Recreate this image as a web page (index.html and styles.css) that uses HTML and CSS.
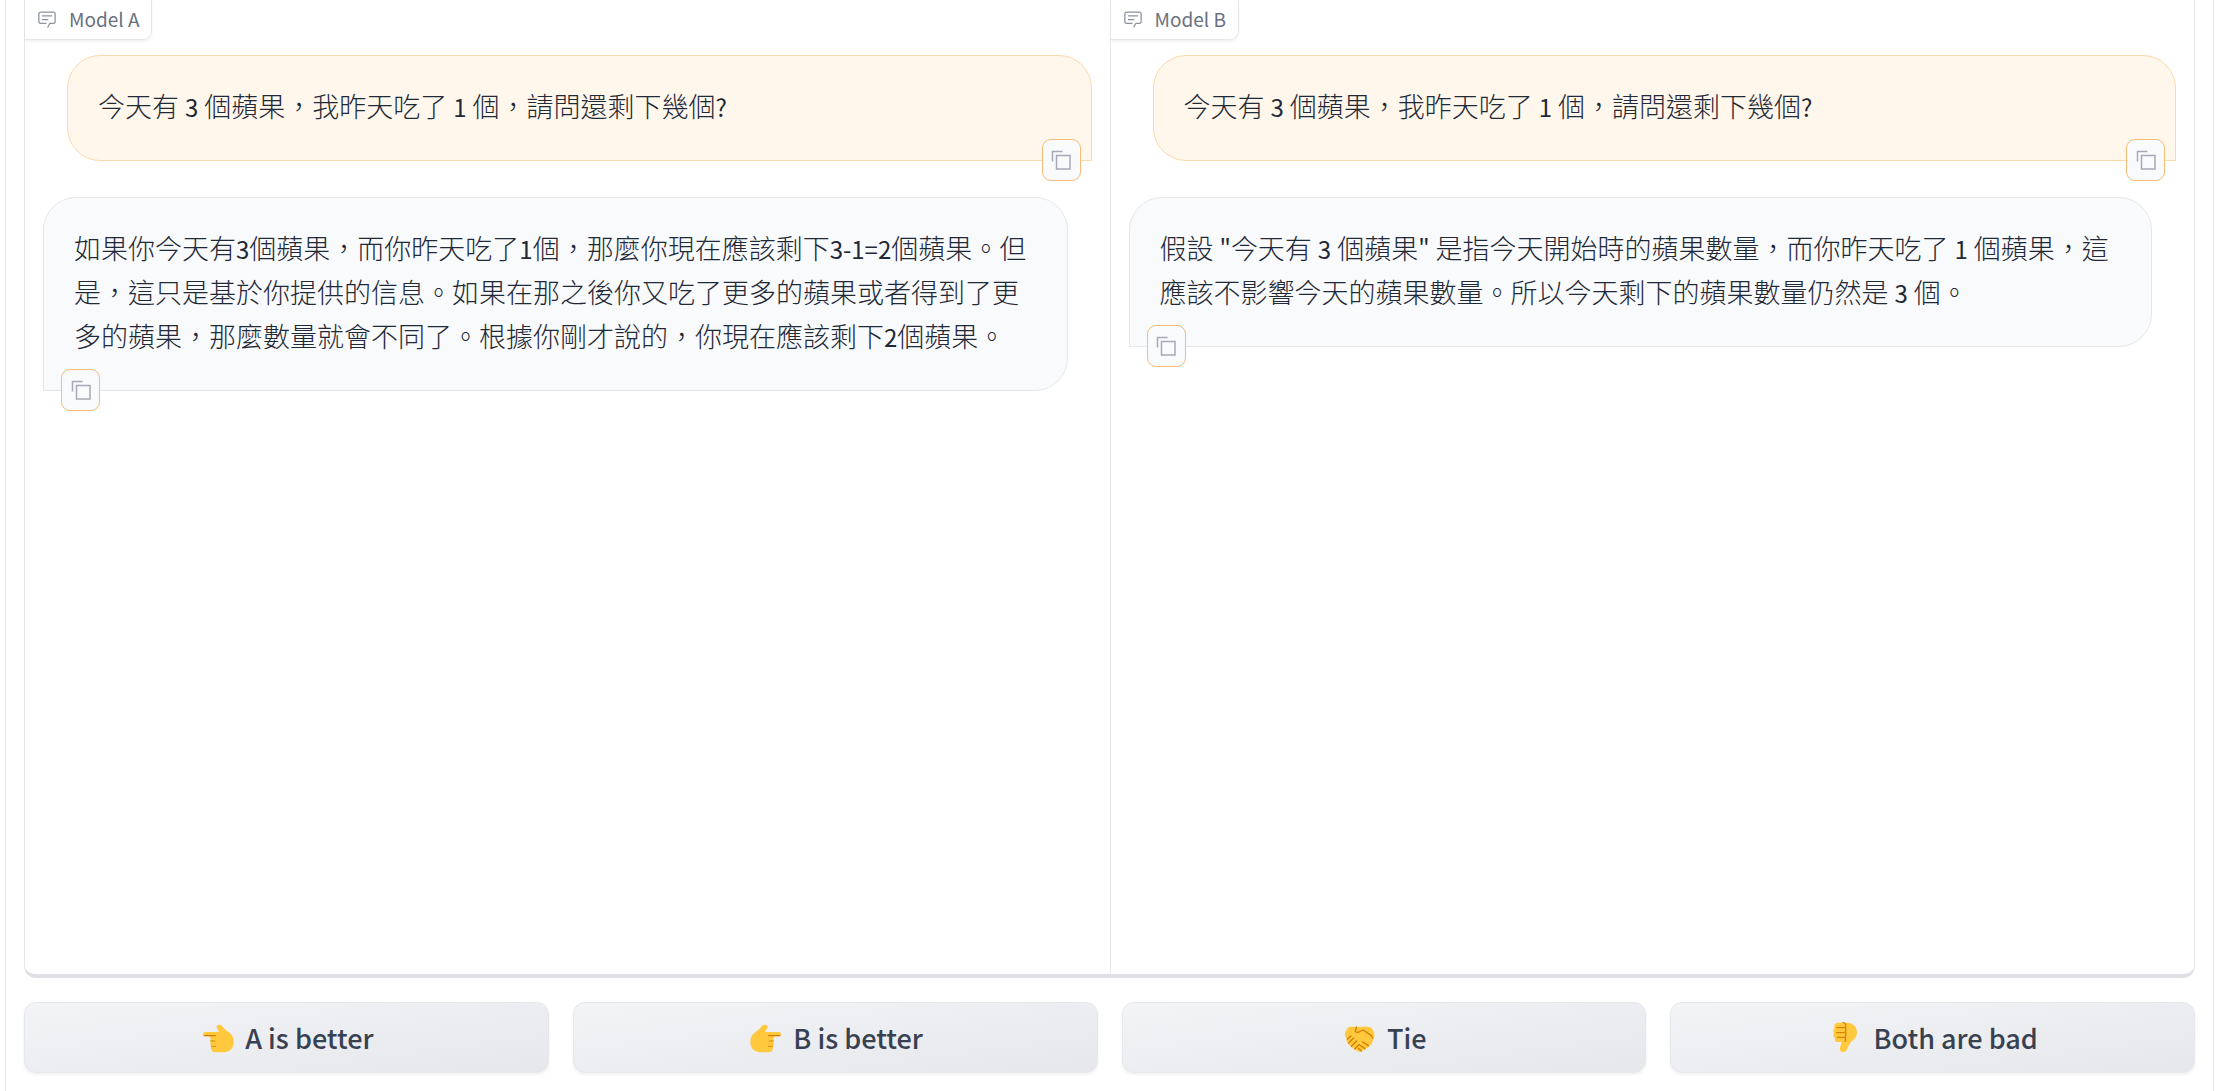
FILE: index.html
```html
<!DOCTYPE html>
<html lang="zh-Hant">
<head>
<meta charset="utf-8">
<meta name="viewport" content="width=device-width, initial-scale=1">
<title>Model A / Model B</title>
<link rel="stylesheet" href="styles.css">
</head>
<body>
<svg class="sprite" aria-hidden="true">
  <symbol id="chat" viewBox="0 0 32 32">
    <path fill="currentColor" d="M17.74 30L16 29l4-7h6a2 2 0 0 0 2-2V8a2 2 0 0 0-2-2H6a2 2 0 0 0-2 2v12a2 2 0 0 0 2 2h9v2H6a4 4 0 0 1-4-4V8a4 4 0 0 1 4-4h20a4 4 0 0 1 4 4v12a4 4 0 0 1-4 4h-4.840z"/>
    <path fill="currentColor" d="M8 10h16v2H8zm0 6h10v2H8z"/>
  </symbol>
  <symbol id="copy" viewBox="0 0 20 20">
    <path fill="none" stroke="currentColor" stroke-width="1.500" d="M5.500 5.500h13.500v13.500H5.500zM1.500 11.500V1.500H11.500"/>
  </symbol>
  <symbol id="point" viewBox="13 -6 114 114">
    <path fill="#ffc83d" d="M31 33Q25 34 25 39Q25 46 31 46H46Q47 51 48 55Q45 60 48 64Q45 70 49 76Q48 82 51 88Q54 94 67 94H80Q117 94 117 62Q117 44 104 35Q92 27 81 14Q75 9 68 13Q63 18 68 25L73 33Z"/>
    <path fill="none" stroke="#d67d00" stroke-width="4" stroke-linecap="round" d="M29 44H62"/>
    <path fill="none" stroke="#e39d1b" stroke-width="4" stroke-linecap="round" d="M49 60H60M50 76H63"/>
  </symbol>
</svg>
<div class="page">
  <main class="arena">
    <section class="pane">
      <h2 class="label"><svg class="label-icon" aria-hidden="true"><use href="#chat"/></svg>Model A</h2>
      <div class="thread">
        <article class="message user">
          <p>今天有 <span class="latin">3</span> 個蘋果，我昨天吃了 <span class="latin">1</span> 個，請問還剩下幾個<span class="latin">?</span></p>
          <button class="copy" type="button" aria-label="Copy"><svg aria-hidden="true"><use href="#copy"/></svg></button>
        </article>
        <article class="message bot">
          <p>如果你今天有<span class="latin">3</span>個蘋果，而你昨天吃了<span class="latin">1</span>個，那麼你現在應該剩下<span class="latin">3-1=2</span>個蘋果。但是，這只是基於你提供的信息。如果在那之後你又吃了更多的蘋果或者得到了更多的蘋果，那麼數量就會不同了。根據你剛才說的，你現在應該剩下<span class="latin">2</span>個蘋果。</p>
          <button class="copy" type="button" aria-label="Copy"><svg aria-hidden="true"><use href="#copy"/></svg></button>
        </article>
      </div>
    </section>
    <section class="pane">
      <h2 class="label"><svg class="label-icon" aria-hidden="true"><use href="#chat"/></svg>Model B</h2>
      <div class="thread">
        <article class="message user">
          <p>今天有 <span class="latin">3</span> 個蘋果，我昨天吃了 <span class="latin">1</span> 個，請問還剩下幾個<span class="latin">?</span></p>
          <button class="copy" type="button" aria-label="Copy"><svg aria-hidden="true"><use href="#copy"/></svg></button>
        </article>
        <article class="message bot">
          <p>假設 <span class="latin">"</span>今天有 <span class="latin">3</span> 個蘋果<span class="latin">"</span> 是指今天開始時的蘋果數量，而你昨天吃了 <span class="latin">1</span> 個蘋果，這應該不影響今天的蘋果數量。所以今天剩下的蘋果數量仍然是 <span class="latin">3</span> 個。</p>
          <button class="copy" type="button" aria-label="Copy"><svg aria-hidden="true"><use href="#copy"/></svg></button>
        </article>
      </div>
    </section>
  </main>
  <div class="votes">
    <button class="vote" type="button"><svg class="emoji" aria-hidden="true"><use href="#point"/></svg>A is better</button>
    <button class="vote" type="button"><svg class="emoji flipped" aria-hidden="true"><use href="#point"/></svg>B is better</button>
    <button class="vote" type="button">
      <svg class="emoji" viewBox="6 -6 114 114" aria-hidden="true">
        <path fill="#ffc83d" d="M25 22Q31 16 43 17Q55 19 64 18Q80 15 93 19Q101 22 105 33Q109 43 105 52Q102 57 100 64Q99 71 93 73Q90 82 82 81Q79 89 72 88Q65 96 57 91Q49 88 47 83Q37 82 36 76Q28 74 27 66Q20 62 24 54Q15 45 19 34Z"/>
        <path fill="none" stroke="#d67d00" stroke-width="4" stroke-linecap="round" stroke-linejoin="round" d="M52 18L49 32Q56 37 65 30L73 27L96 43L101 51M25 55Q30 50 36 45M29 66L44 51M37 76L53 60M47 84L60 71M71 63L88 74M62 72L78 83M58 82L67 90"/>
      </svg>Tie</button>
    <button class="vote" type="button">
      <svg class="emoji" viewBox="150 174 114 114" aria-hidden="true">
        <path fill="#ffc83d" d="M181 185H210Q239 187 240 213Q240 229 226 239Q217 247 209 267Q204 275 194 272Q187 269 189 260L194 243H180Q171 241 174 231Q166 226 171 217Q166 209 172 202Q169 188 181 185Z"/>
        <path fill="none" stroke="#d68500" stroke-width="4" stroke-linecap="round" d="M180 200H202M179 215H202M181 229H202M198 185Q209 186 205 197Q209 204 205 211Q209 218 205 226Q207 236 204 241"/>
      </svg>Both are bad</button>
  </div>
</div>
</body>
</html>
```

FILE: styles.css
```css
* {
  box-sizing: border-box;
}

body {
  margin: 0;
  background: #fff;
  color: #1f2937;
  font-family: "Noto Sans CJK TC", "Noto Sans", sans-serif;
}

.sprite {
  position: absolute;
  width: 0;
  height: 0;
}

.page {
  display: flex;
  flex-direction: column;
  gap: 24px;
  min-height: 100vh;
  margin: 0 9px 0 5px;
  padding: 0 18px;
  padding-bottom: 18px;
  border: solid #e5e7eb;
  border-width: 0 1px;
}

.arena {
  display: grid;
  grid-template-columns: 1fr 1fr;
  flex: 1;
  border: 1px solid #e5e7eb;
  border-width: 0 1px 4px;
  border-bottom-color: #dfe1e5;
  border-radius: 0 0 12px 12px;
}

.pane + .pane {
  border-left: 1px solid #e5e7eb;
}

.label {
  display: flex;
  align-items: center;
  gap: 12px;
  width: fit-content;
  height: 40px;
  margin: 0;
  padding: 0 12px 2px;
  border: solid #e5e7eb;
  border-width: 0 1px 1px 0;
  border-radius: 0 0 9px 0;
  box-shadow: 0 2px 3px rgba(0, 0, 0, 0.05);
  color: #6b7280;
  font-size: 19px;
  font-weight: 400;
  line-height: 24px;
}

.label-icon {
  width: 20px;
  height: 20px;
  color: #8b919c;
}

.thread {
  display: flex;
  flex-direction: column;
  gap: 36px;
  padding: 15px 18px 36px;
}

.message {
  position: relative;
  padding: 28px 30px 32px;
  border: 1px solid;
  border-radius: 33px;
  font-size: 27px;
  font-weight: 200;
  line-height: 44px;
}

.message p {
  margin: 0;
}

.latin {
  font-size: 24px;
  font-weight: 400;
  line-height: 1;
}

.user {
  margin-left: 24px;
  border-color: #fbd9ab;
  border-bottom-right-radius: 0;
  background: #fff7eb;
}

.bot {
  margin-right: 24px;
  border-color: #e5e7eb;
  border-bottom-left-radius: 0;
  background: #f9fafc;
}

.copy {
  position: absolute;
  bottom: -21px;
  display: grid;
  place-items: center;
  width: 39px;
  height: 42px;
  padding: 0;
  border: 1px solid #f5bd78;
  border-radius: 9px;
  background: #f9fafb;
  color: #a5a9b8;
}

.user .copy {
  right: 10px;
}

.bot .copy {
  left: 17px;
}

.copy svg {
  width: 20px;
  height: 20px;
}

.votes {
  display: grid;
  grid-template-columns: repeat(4, 1fr);
  gap: 24px;
}

.vote {
  display: flex;
  align-items: center;
  justify-content: center;
  gap: 8px;
  height: 71px;
  padding: 0 12px;
  border: 1px solid #e5e7eb;
  border-radius: 12px;
  background: linear-gradient(to bottom right, #f3f4f6, #e5e7eb);
  box-shadow: 0 2px 3px rgba(0, 0, 0, 0.06);
  color: #374151;
  font: 500 27px/36px "Noto Sans CJK TC", "Noto Sans", sans-serif;
}

.emoji {
  width: 38px;
  height: 38px;
}

.flipped {
  transform: scaleX(-1);
}
```
